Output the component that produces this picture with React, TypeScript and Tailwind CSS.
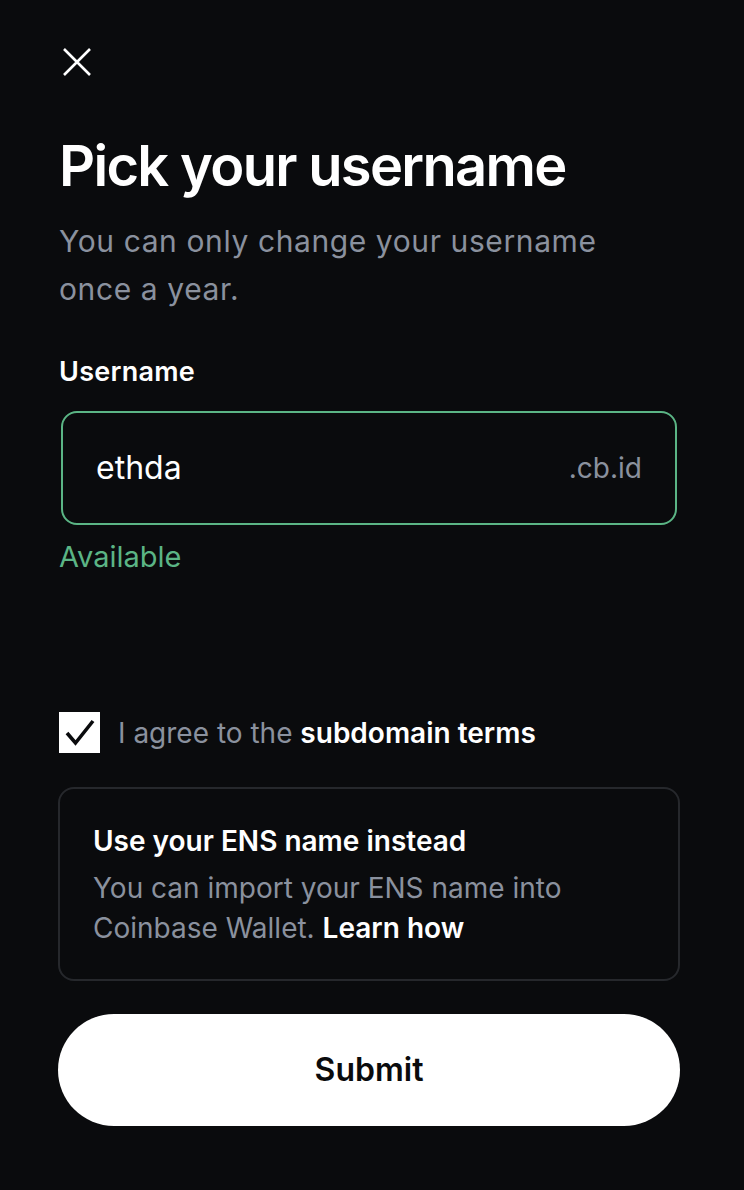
import React from "react";

export default function App() {
  const font = { fontFamily: "Inter, 'Noto Sans', sans-serif" };
  return (
    <div className="min-h-[1190px] w-full bg-[#0a0b0d] text-white" style={font}>
      <div className="pl-[58px] pr-[64px] pt-[46px] flex flex-col">
        <button className="w-[32px] h-[32px] flex items-center justify-center ml-[3px]">
          <svg width="30" height="30" viewBox="0 0 30 30" fill="none">
            <path d="M2 2 L28 28 M28 2 L2 28" stroke="white" strokeWidth="2.6" strokeLinecap="butt" />
          </svg>
        </button>
        <h1 className="mt-[56px] text-[56px] leading-[64px] font-semibold tracking-[-0.03em] ml-[1px] whitespace-nowrap">
          Pick your username
        </h1>
        <p className="mt-[19px] max-w-[580px] text-[30px] leading-[48px] tracking-[0.02em] text-[#8a919e] ml-[1px]">
          You can only change your username once a year.
        </p>
        <label className="mt-[42px] text-[27px] leading-[34px] font-semibold tracking-[0.01em] ml-[1px]">Username</label>
        <div className="mt-[22px] mx-[3px] h-[114px] rounded-[16px] border-2 border-[#5bb585] flex items-center justify-between pl-[33px] pr-[33px]">
          <span className="text-[32px]">ethda</span>
          <span className="text-[28px] text-[#8a919e]">.cb.id</span>
        </div>
        <div className="mt-[13px] text-[29px] leading-[38px] text-[#5bb585] ml-[1px]">Available</div>
        <div className="mt-[136px] flex items-center gap-[18px] ml-[1px]">
          <div className="w-[41px] h-[41px] bg-white flex items-center justify-center">
            <svg width="32" height="32" viewBox="0 0 32 32" fill="none">
              <path d="M3 16 L11.5 26 L29 4" stroke="#0a0b0d" strokeWidth="3.6" strokeLinejoin="miter" />
            </svg>
          </div>
          <span className="text-[28px] leading-[34px] text-[#8a919e]">
            I agree to the <span className="text-white font-semibold">subdomain terms</span>
          </span>
        </div>
        <div className="mt-[34px] rounded-[16px] border-2 border-[#26282c] px-[33px] pt-[33px] pb-[31px]">
          <div className="text-[28px] leading-[38px] font-semibold">Use your ENS name instead</div>
          <div className="mt-[8px] text-[28px] leading-[40px] text-[#8a919e]">
            You can import your ENS name into
            <br />
            Coinbase Wallet. <span className="text-white font-semibold">Learn how</span>
          </div>
        </div>
        <button className="mt-[33px] h-[112px] rounded-full bg-white text-[#0a0b0d] text-[32px] font-semibold">
          Submit
        </button>
      </div>
    </div>
  );
}
